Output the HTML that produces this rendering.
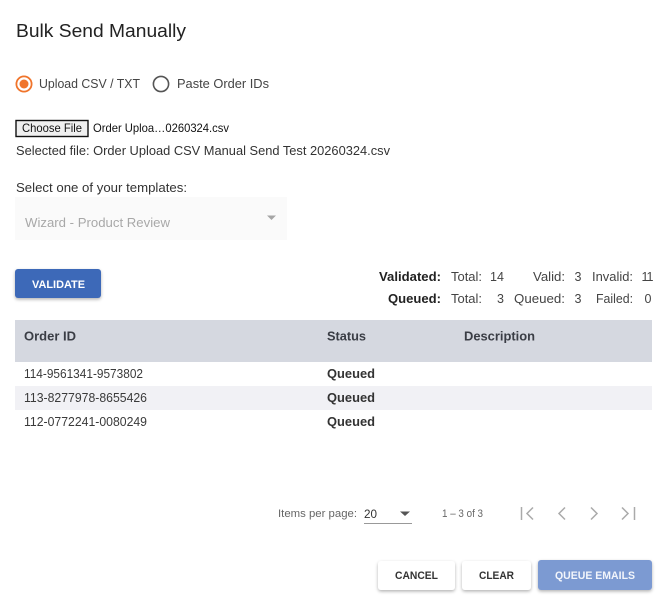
<!DOCTYPE html>
<html><head><meta charset="utf-8">
<style>
html,body{margin:0;padding:0;background:#fff;width:670px;height:606px;overflow:hidden}
svg{display:block;filter:blur(.3px)}
text{font-family:"Liberation Sans",sans-serif;font-size:12.5px;fill:#333}
.b{font-weight:bold}
</style></head><body>
<svg width="670" height="606" viewBox="0 0 670 606" xmlns="http://www.w3.org/2000/svg">
<defs>
<filter id="s" x="-10%" y="-20%" width="120%" height="150%"><feDropShadow dx="0" dy="1.5" stdDeviation="1.5" flood-color="#000" flood-opacity=".3"/></filter>
</defs>
<text x="16" y="37" textLength="170" lengthAdjust="spacingAndGlyphs" style="font-size:18px;fill:#222">Bulk Send Manually</text>

<circle cx="24" cy="84" r="7.6" fill="none" stroke="#f0742b" stroke-width="1.8"/>
<circle cx="24" cy="84" r="4.5" fill="#f0742b"/>
<text x="39" y="88" textLength="101" lengthAdjust="spacingAndGlyphs" style="font-size:13px;fill:#444">Upload CSV / TXT</text>
<circle cx="161" cy="84" r="7.6" fill="none" stroke="#555" stroke-width="1.6"/>
<text x="177" y="88" textLength="92" lengthAdjust="spacingAndGlyphs" style="font-size:13px;fill:#444">Paste Order IDs</text>

<rect x="16" y="120.5" width="72" height="16" fill="#efefef" stroke="#111" stroke-width="1.4"/>
<text x="22" y="132" textLength="60" lengthAdjust="spacingAndGlyphs" style="font-size:12px;fill:#111">Choose File</text>
<text x="93" y="132" textLength="136" lengthAdjust="spacingAndGlyphs" style="font-size:12px;fill:#111">Order Uploa…0260324.csv</text>
<text x="16" y="155" textLength="374" lengthAdjust="spacingAndGlyphs" style="font-size:12.5px;fill:#333">Selected file: Order Upload CSV Manual Send Test 20260324.csv</text>

<text x="16" y="192" textLength="171" lengthAdjust="spacingAndGlyphs" style="font-size:12.5px;fill:#333">Select one of your templates:</text>
<rect x="15" y="197" width="272" height="43" fill="#fafafa"/>
<text x="25" y="227" textLength="145" lengthAdjust="spacingAndGlyphs" style="font-size:13px;fill:#a8a8a8">Wizard - Product Review</text>
<path d="M267 215.5h9l-4.5 4.5z" fill="#a5a5a5"/>

<rect x="15" y="269" width="86" height="29" rx="3" fill="#3d69b8" filter="url(#s)"/>
<text x="32" y="288" textLength="53" lengthAdjust="spacingAndGlyphs" class="b" style="font-size:11px;fill:#fff">VALIDATE</text>

<text x="379" y="281" textLength="62" lengthAdjust="spacingAndGlyphs" class="b" style="font-size:12.5px;fill:#222">Validated:</text>
<text x="451" y="281" textLength="31" lengthAdjust="spacingAndGlyphs" style="font-size:12.5px;fill:#444">Total:</text>
<text x="490 497" y="281" style="font-size:12.5px;fill:#444">14</text>
<text x="533" y="281" textLength="32" lengthAdjust="spacingAndGlyphs" style="font-size:12.5px;fill:#444">Valid:</text>
<text x="574.5" y="281" style="font-size:12.5px;fill:#444">3</text>
<text x="592" y="281" textLength="41" lengthAdjust="spacingAndGlyphs" style="font-size:12.5px;fill:#444">Invalid:</text>
<text x="641.5 646.5" y="281" style="font-size:12.5px;fill:#444">11</text>
<text x="388" y="303" textLength="53" lengthAdjust="spacingAndGlyphs" class="b" style="font-size:12.5px;fill:#222">Queued:</text>
<text x="451" y="303" textLength="31" lengthAdjust="spacingAndGlyphs" style="font-size:12.5px;fill:#444">Total:</text>
<text x="497" y="303" style="font-size:12.5px;fill:#444">3</text>
<text x="514" y="303" textLength="51" lengthAdjust="spacingAndGlyphs" style="font-size:12.5px;fill:#444">Queued:</text>
<text x="574.5" y="303" style="font-size:12.5px;fill:#444">3</text>
<text x="596" y="303" textLength="37" lengthAdjust="spacingAndGlyphs" style="font-size:12.5px;fill:#444">Failed:</text>
<text x="644.5" y="303" style="font-size:12.5px;fill:#444">0</text>

<rect x="15" y="320" width="637" height="42" fill="#d5d8e0"/>
<text x="24" y="340.5" textLength="52" lengthAdjust="spacingAndGlyphs" class="b" style="font-size:12.5px;fill:#3a3d45">Order ID</text>
<text x="327" y="340.5" textLength="39" lengthAdjust="spacingAndGlyphs" class="b" style="font-size:12.5px;fill:#3a3d45">Status</text>
<text x="464" y="340.5" textLength="71" lengthAdjust="spacingAndGlyphs" class="b" style="font-size:12.5px;fill:#3a3d45">Description</text>

<rect x="15" y="386" width="637" height="24" fill="#f1f1f5"/>
<text x="24" y="378" textLength="119" lengthAdjust="spacingAndGlyphs" style="font-size:13px;fill:#3a3a3a">114-9561341-9573802</text>
<text x="327" y="378" textLength="48" lengthAdjust="spacingAndGlyphs" class="b" style="font-size:12.5px;fill:#333">Queued</text>
<text x="24" y="402" textLength="123" lengthAdjust="spacingAndGlyphs" style="font-size:13px;fill:#3a3a3a">113-8277978-8655426</text>
<text x="327" y="402" textLength="48" lengthAdjust="spacingAndGlyphs" class="b" style="font-size:12.5px;fill:#333">Queued</text>
<text x="24" y="426" textLength="123" lengthAdjust="spacingAndGlyphs" style="font-size:13px;fill:#3a3a3a">112-0772241-0080249</text>
<text x="327" y="426" textLength="48" lengthAdjust="spacingAndGlyphs" class="b" style="font-size:12.5px;fill:#333">Queued</text>

<text x="278" y="517" textLength="79" lengthAdjust="spacingAndGlyphs" style="font-size:11px;fill:#666">Items per page:</text>
<text x="364" y="518" textLength="13" lengthAdjust="spacingAndGlyphs" style="font-size:12px;fill:#333">20</text>
<path d="M400 511.5h10l-5 4.5z" fill="#555"/>
<rect x="364" y="523" width="48" height="1" fill="#999"/>
<text x="442" y="517" textLength="41" lengthAdjust="spacingAndGlyphs" style="font-size:11px;fill:#666">1 – 3 of 3</text>
<g fill="none" stroke="#aaa" stroke-width="1.5">
<path d="M521.5 507v13M533 507.5l-6 6 6 6"/>
<path d="M565 507.5l-6 6 6 6"/>
<path d="M591 507.5l6 6-6 6"/>
<path d="M622 507.5l6 6-6 6M634.5 507v13"/>
</g>

<rect x="378" y="561" width="77" height="29" rx="3" fill="#fff" filter="url(#s)"/>
<text x="395" y="579" textLength="43" lengthAdjust="spacingAndGlyphs" class="b" style="font-size:11px;fill:#333">CANCEL</text>
<rect x="462" y="561" width="69" height="29" rx="3" fill="#fff" filter="url(#s)"/>
<text x="479" y="579" textLength="35" lengthAdjust="spacingAndGlyphs" class="b" style="font-size:11px;fill:#333">CLEAR</text>
<rect x="538" y="560" width="114" height="30" rx="3" fill="#7c9ad2" filter="url(#s)"/>
<text x="555" y="579" textLength="80" lengthAdjust="spacingAndGlyphs" class="b" style="font-size:11px;fill:#f2f5fb">QUEUE EMAILS</text>
</svg>
</body></html>
